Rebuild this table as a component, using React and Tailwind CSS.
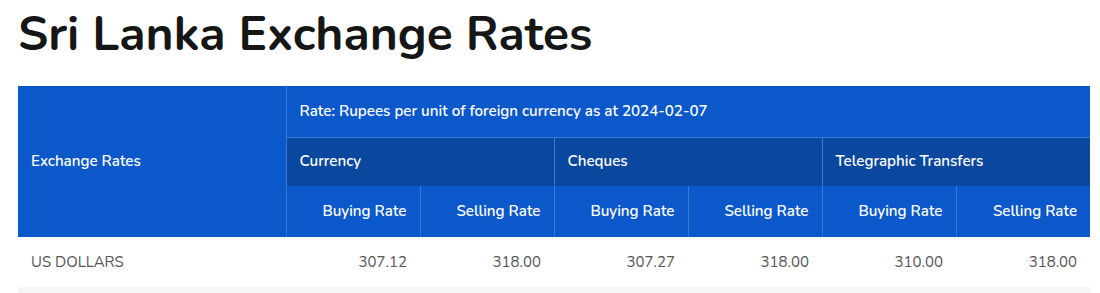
export default function App() {
  const font = { fontFamily: '"Nunito", "Noto Sans", "Open Sans", sans-serif' };
  const th = "px-[13px] font-semibold text-white text-[15.15px]";
  return (
    <div className="bg-white w-[1100px] h-[293px] overflow-hidden" style={font}>
      <h1 className="pl-[18px] pt-[6px] text-[48px] leading-[56px] font-bold text-[#161616]">
        Sri Lanka Exchange Rates
      </h1>
      <div className="pl-[18px] pt-[24px]">
        <table className="w-[1072px] border-collapse table-fixed">
          <colgroup>
            <col className="w-[268px]" />
            <col className="w-[134px]" />
            <col className="w-[134px]" />
            <col className="w-[134px]" />
            <col className="w-[134px]" />
            <col className="w-[134px]" />
            <col className="w-[134px]" />
          </colgroup>
          <thead>
            <tr className="h-[51px] bg-[#0b58ca]">
              <th rowSpan={3} className={`${th} text-left border-r border-[#3a78d6]`}>Exchange Rates</th>
              <th colSpan={6} className={`${th} text-left border-b border-[#3a78d6]`}>
                Rate: Rupees per unit of foreign currency as at 2024-02-07
              </th>
            </tr>
            <tr className="h-[49px] bg-[#0a479f]">
              <th colSpan={2} className={`${th} text-left border-r border-[#3a78d6]`}>Currency</th>
              <th colSpan={2} className={`${th} text-left border-r border-[#3a78d6]`}>Cheques</th>
              <th colSpan={2} className={`${th} text-left`}>Telegraphic Transfers</th>
            </tr>
            <tr className="h-[51px] bg-[#0b58ca]">
              <th className={`${th} text-right border-r border-[#3a78d6]`}>Buying Rate</th>
              <th className={`${th} text-right border-r border-[#3a78d6]`}>Selling Rate</th>
              <th className={`${th} text-right border-r border-[#3a78d6]`}>Buying Rate</th>
              <th className={`${th} text-right border-r border-[#3a78d6]`}>Selling Rate</th>
              <th className={`${th} text-right border-r border-[#3a78d6]`}>Buying Rate</th>
              <th className={`${th} text-right`}>Selling Rate</th>
            </tr>
          </thead>
          <tbody className="text-[15px] text-[#555]">
            <tr className="h-[50px] bg-white">
              <td className="px-[13px] text-left">US DOLLARS</td>
              <td className="px-[13px] text-right">307.12</td>
              <td className="px-[13px] text-right">318.00</td>
              <td className="px-[13px] text-right">307.27</td>
              <td className="px-[13px] text-right">318.00</td>
              <td className="px-[13px] text-right">310.00</td>
              <td className="px-[13px] text-right">318.00</td>
            </tr>
            <tr className="h-[50px] bg-[#f5f6f7]">
              <td colSpan={7}></td>
            </tr>
          </tbody>
        </table>
      </div>
    </div>
  );
}
